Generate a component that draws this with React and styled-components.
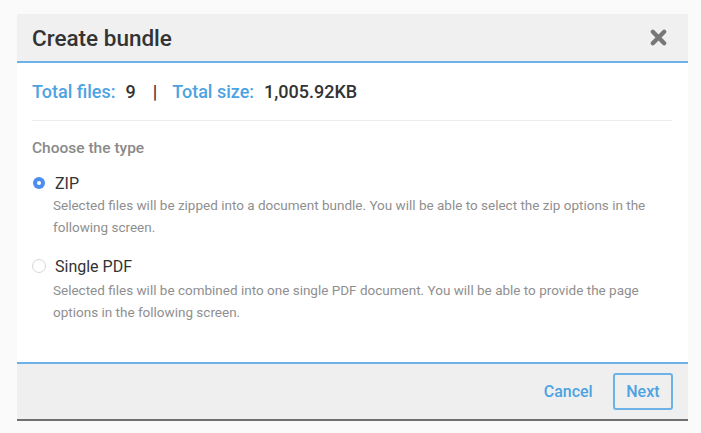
import React from 'react';
import styled, { createGlobalStyle } from 'styled-components';

const GlobalStyle = createGlobalStyle`
  html, body {
    margin: 0;
    padding: 0;
    background: #fafafa;
    font-family: Roboto, 'Liberation Sans', sans-serif;
  }
`;

const Page = styled.div`
  width: 701px;
  height: 433px;
  padding: 14px 0 0 17px;
  box-sizing: border-box;
`;

const Dialog = styled.div`
  width: 671px;
  background: #fff;
  display: flex;
  flex-direction: column;
`;

const Header = styled.div`
  height: 47px;
  background: #f0f0f0;
  border-bottom: 2px solid #6cb2e6;
  display: flex;
  align-items: center;
  justify-content: space-between;
  padding: 0 20px 0 15px;
`;

const Title = styled.h2`
  margin: 0;
  font-size: 22.5px;
  font-weight: 500;
  color: #333;
`;

const CloseButton = styled.button`
  border: 0;
  background: none;
  padding: 0;
  width: 20px;
  height: 20px;
  display: flex;
  align-items: center;
  justify-content: center;
  cursor: pointer;
`;

const Body = styled.div`
  height: 299px;
  padding: 0 16px 0 15px;
`;

const Summary = styled.div`
  display: flex;
  align-items: center;
  height: 57px;
  border-bottom: 1px solid #ececec;
  font-size: 18px;
  font-weight: 500;
  color: #333;
`;

const Label = styled.span`
  color: #4da3e2;
  margin-right: 10px;
`;

const Sep = styled.span`
  margin: 0 15px 0 17px;
`;

const SectionTitle = styled.div`
  margin-top: 18px;
  font-size: 15.5px;
  line-height: 18px;
  font-weight: 500;
  color: #8a8a8a;
`;

const Option = styled.label`
  display: block;
  margin-top: ${(p) => p.gap}px;
  cursor: pointer;
`;

const OptionHead = styled.div`
  display: flex;
  align-items: center;
  gap: 9px;
  font-size: 16px;
  color: #333;
  height: 20px;
`;

const Radio = styled.span`
  width: 12px;
  height: 12px;
  border-radius: 50%;
  box-sizing: border-box;
  position: relative;
  margin-left: ${(p) => (p.checked ? '1px' : '0')};
  margin-right: ${(p) => (p.checked ? '1px' : '0')};
  ${(p) =>
    p.checked
      ? `background: #4b8ef0;
         &::after { content: ''; position: absolute; left: 4px; top: 4px; width: 4px; height: 4px; border-radius: 50%; background: #fff; }`
      : `width: 14px; height: 14px; border: 1.5px solid #d6d6d6; background: #fff;`}
`;

const Desc = styled.p`
  margin: ${(p) => p.offset || 1}px 0 0;
  padding-left: 21px;
  font-size: 13.5px;
  line-height: 22px;
  color: #8f8f8f;
`;

const Footer = styled.div`
  height: 55px;
  background: #efefef;
  border-top: 2px solid #6cb2e6;
  border-bottom: 2px solid #707070;
  display: flex;
  align-items: center;
  justify-content: flex-end;
  gap: 18px;
  padding: 0 15px 0 16px;
`;

const Button = styled.button`
  font-family: Roboto, 'Liberation Sans', sans-serif;
  font-size: 16px;
  font-weight: 500;
  color: #4da3e2;
  background: none;
  border: 2px solid ${(p) => (p.outlined ? '#6cb2e6' : 'transparent')};
  border-radius: 3px;
  height: 37px;
  padding: 0 ${(p) => (p.outlined ? 11.5 : 0)}px;
  cursor: pointer;
`;

const App = () => {
  return (
    <Page>
      <GlobalStyle />
      <Dialog>
        <Header>
          <Title>Create bundle</Title>
          <CloseButton aria-label="Close">
            <svg width="19" height="19" viewBox="0 0 20 20">
              <path d="M4 4 L16 16 M16 4 L4 16" stroke="#777" strokeWidth="4.6" strokeLinecap="round" />
            </svg>
          </CloseButton>
        </Header>
        <Body>
          <Summary>
            <Label>Total files:</Label>9<Sep>|</Sep>
            <Label>Total size:</Label>1,005.92KB
          </Summary>
          <SectionTitle>Choose the type</SectionTitle>
          <Option gap={16}>
            <OptionHead>
              <Radio checked />
              ZIP
            </OptionHead>
            <Desc>
              Selected files will be zipped into a document bundle. You will be able to select the zip options in the
              following screen.
            </Desc>
          </Option>
          <Option gap={18}>
            <OptionHead>
              <Radio />
              Single PDF
            </OptionHead>
            <Desc offset={3}>
              Selected files will be combined into one single PDF document. You will be able to provide the page
              options in the following screen.
            </Desc>
          </Option>
        </Body>
        <Footer>
          <Button>Cancel</Button>
          <Button outlined>Next</Button>
        </Footer>
      </Dialog>
    </Page>
  );
};

export default App;
